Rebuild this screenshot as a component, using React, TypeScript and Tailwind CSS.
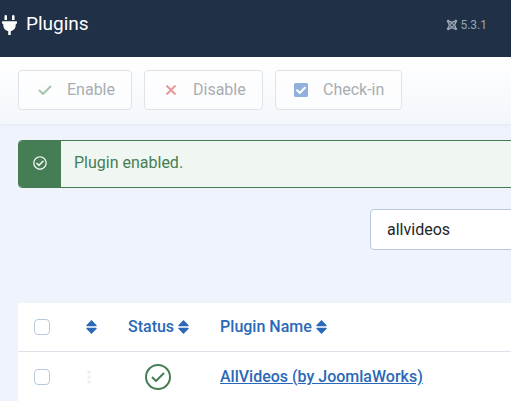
import { FaCheckSquare, FaJoomla, FaPlug, FaRegCheckCircle } from "react-icons/fa";

const ToolbarButton = ({ icon, label, className }: { icon: React.ReactNode; label: string; className: string }) => (
  <button className={`flex h-[40px] items-center rounded-[4px] border border-[#dfe3e9] bg-white/60 text-[16px] text-[#a9adb3] ${className}`}>
    {icon}
    {label}
  </button>
);

const SortIcon = ({ className }: { className?: string }) => (
  <svg viewBox="0 0 11 14" className={`h-[14px] w-[11px] fill-[#2a69b8] ${className ?? ""}`}>
    <path d="M5.5 0 L10.6 5.2 Q11 6.2 10 6.2 L1 6.2 Q0 6.2 .4 5.2 Z" />
    <path d="M1 7.8 L10 7.8 Q11 7.8 10.6 8.8 L5.5 14 L.4 8.8 Q0 7.8 1 7.8 Z" />
  </svg>
);

const CheckMark = ({ className }: { className: string }) => (
  <svg viewBox="0 0 14 10" fill="none" stroke="currentColor" strokeWidth="2" className={className}>
    <path d="M1 5 L5 9 L13 1" />
  </svg>
);

const App = () => {
  return (
    <div className="h-[401px] w-[511px] overflow-hidden bg-[#eff4fc] font-['Roboto',sans-serif]">
      {/* Header */}
      <div className="flex h-[57px] items-center justify-between bg-[#1f3047] pb-[8px] pl-[2px] pr-[24px]">
        <div className="flex items-center gap-[9px] text-white">
          <FaPlug className="h-[20px] w-[15px]" />
          <span className="text-[19px]">Plugins</span>
        </div>
        <div className="flex items-center gap-[2px] text-[12px] text-[#9aa5b3]">
          <FaJoomla className="h-[12px] w-[12px]" />
          5.3.1
        </div>
      </div>

      {/* Toolbar */}
      <div className="flex h-[67px] items-start gap-[12px] bg-gradient-to-b from-white to-[#f3f6fb] pl-[18px] pt-[13px] shadow-[0_1px_4px_rgba(30,60,120,0.06)]">
        <ToolbarButton
          className="w-[114px] pl-[19px]"
          label="Enable"
          icon={<CheckMark className="mr-[15px] h-[10px] w-[14px] text-[#a5c4ae]" />}
        />
        <ToolbarButton
          className="w-[119px] pl-[21px]"
          label="Disable"
          icon={
            <svg viewBox="0 0 10 10" fill="none" stroke="currentColor" strokeWidth="2" className="mr-[17px] h-[10px] w-[10px] text-[#e59a9a]">
              <path d="M0.5 0.5 L9.5 9.5 M9.5 0.5 L0.5 9.5" />
            </svg>
          }
        />
        <ToolbarButton
          className="w-[127px] pl-[18px]"
          label="Check-in"
          icon={<FaCheckSquare className="mr-[15px] h-[16px] w-[14px] text-[#92b0dc]" />}
        />
      </div>

      {/* Alert */}
      <div className="ml-[18px] mt-[16px] flex h-[48px] w-[600px] overflow-hidden rounded-[4px] border border-[#457d54] bg-[#f0f7f3]">
        <div className="flex w-[42px] items-center justify-center bg-[#457d54] pb-[3px] text-[#f0f7f3]">
          <FaRegCheckCircle className="h-[14px] w-[14px]" />
        </div>
        <div className="flex items-center pb-[2px] pl-[13px] text-[16px] text-[#457d54]">Plugin enabled.</div>
      </div>

      {/* Search */}
      <div className="ml-[370px] mt-[21px] flex h-[41px] w-[200px] items-center rounded-[4px] border border-[#b9c8e0] bg-white pl-[16px] text-[16px] text-[#22262a]">
        allvideos
      </div>

      {/* Table */}
      <div className="ml-[18px] mt-[53px] w-[600px] bg-white">
        <div className="flex h-[49px] items-center border-b border-[#dfe3e9] text-[16px] font-medium text-[#2a69b8]">
          <span className="ml-[16px] h-[16px] w-[16px] rounded-[4px] border border-[#b9c8e0] bg-white" />
          <SortIcon className="ml-[36px]" />
          <span className="ml-[31px] flex items-center gap-[4px]">
            Status
            <SortIcon />
          </span>
          <span className="ml-[31px] flex items-center gap-[4px]">
            Plugin Name
            <SortIcon />
          </span>
        </div>
        <div className="flex h-[50px] items-center text-[16px]">
          <span className="ml-[16px] h-[16px] w-[16px] rounded-[4px] border border-[#b9c8e0] bg-white" />
          <svg viewBox="0 0 4 14" className="ml-[37px] h-[14px] w-[4px] fill-[#eceef1]">
            <circle cx="2" cy="2" r="1.8" />
            <circle cx="2" cy="7" r="1.8" />
            <circle cx="2" cy="12" r="1.8" />
          </svg>
          <span className="ml-[54px] flex h-[26px] w-[26px] items-center justify-center rounded-full border-2 border-[#457d54]">
            <CheckMark className="h-[10px] w-[14px] text-[#457d54]" />
          </span>
          <a href="#" className="ml-[49px] font-medium text-[#2a69b8] underline">
            AllVideos (by JoomlaWorks)
          </a>
        </div>
      </div>
    </div>
  );
};

export default App;
